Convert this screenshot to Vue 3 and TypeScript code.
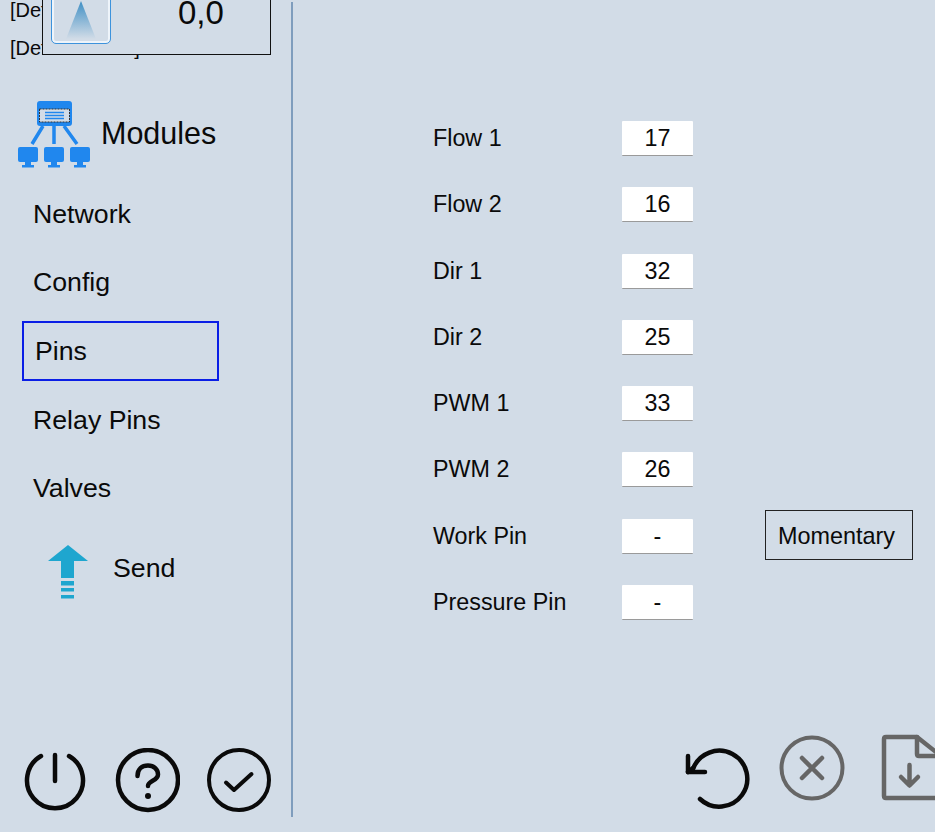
<script setup lang="ts">
const navItems = ['Network', 'Config', 'Pins', 'Relay Pins', 'Valves']
const activeItem = 'Pins'

const pins = [
  { label: 'Flow 1', value: '17' },
  { label: 'Flow 2', value: '16' },
  { label: 'Dir 1', value: '32' },
  { label: 'Dir 2', value: '25' },
  { label: 'PWM 1', value: '33' },
  { label: 'PWM 2', value: '26' },
  { label: 'Work Pin', value: '-', action: 'Momentary' },
  { label: 'Pressure Pin', value: '-' }
]
</script>

<template>
  <div class="screen">
    <aside class="sidebar">
      <div class="log">
        <span>[Default]</span>
        <span>[Default Value]</span>
      </div>

      <!-- floating speed panel, cut off by the window top -->
      <div class="speed-panel">
        <button class="speed-btn">
          <span class="cone"></span>
        </button>
        <span class="speed-value">0,0</span>
      </div>

      <div class="modules">
        <svg class="modules-icon" width="74" height="70" viewBox="0 0 74 70">
          <rect x="19" y="2" width="35" height="25" rx="3" fill="#2087ee" />
          <rect x="21.500" y="10" width="30" height="13" fill="#d2dce7" stroke="#333" stroke-width="1" stroke-dasharray="2 1" />
          <path d="M27 13.500h19M27 16.500h19M27 19.500h19" stroke="#2087ee" stroke-width="1.300" />
          <path d="M25 27 14 45M36 27v18M46 27l13 18" stroke="#2087ee" stroke-width="3.500" fill="none" />
          <g fill="#2087ee">
            <rect x="0" y="48" width="20" height="15" rx="2" />
            <rect x="7" y="63" width="6" height="3" />
            <rect x="4" y="66" width="12" height="2.500" />
            <rect x="26" y="48" width="20" height="15" rx="2" />
            <rect x="33" y="63" width="6" height="3" />
            <rect x="30" y="66" width="12" height="2.500" />
            <rect x="52" y="48" width="20" height="15" rx="2" />
            <rect x="59" y="63" width="6" height="3" />
            <rect x="56" y="66" width="12" height="2.500" />
          </g>
        </svg>
        <span class="modules-label">Modules</span>
      </div>

      <nav class="nav">
        <div
          v-for="item in navItems"
          :key="item"
          :class="['nav-item', { active: item === activeItem }]"
        >
          {{ item }}
        </div>
      </nav>

      <div class="send">
        <svg width="42" height="56" viewBox="0 0 42 56">
          <path d="M21 1 41 17H27V34H14V17H1Z" fill="#1ea6cf" />
          <path d="M14 37h13v4.500H14zM14 44h13v3.500H14zM14 51h13v3.500H14z" fill="#1ea6cf" />
        </svg>
        <span>Send</span>
      </div>

      <div class="bottom-icons">
        <svg width="66" height="66" viewBox="0 0 66 66" fill="none" stroke="#0a0a0a" stroke-width="4.500" stroke-linecap="round">
          <path d="M33 7V33" />
          <path d="M19 8A28 28 0 1 0 47 8" />
        </svg>
        <svg width="66" height="66" viewBox="0 0 66 66" fill="none" stroke="#0a0a0a" stroke-width="4.500" stroke-linecap="round">
          <circle cx="34" cy="32" r="30" />
          <path d="M23.500 28C23.500 21 28 17.500 34 17.500C40 17.500 44 21.500 44 26.500C44 33 34 32.500 34 38" />
          <circle cx="34" cy="48" r="3" fill="#0a0a0a" stroke="none" />
        </svg>
        <svg width="66" height="66" viewBox="0 0 66 66" fill="none" stroke="#0a0a0a" stroke-width="4" stroke-linecap="round" stroke-linejoin="round">
          <circle cx="33" cy="32" r="30" />
          <path d="M20 34.500 28 42 45.500 26" />
        </svg>
      </div>
    </aside>

    <div class="divider"></div>

    <main class="main">
      <div class="pin-list">
        <div v-for="pin in pins" :key="pin.label" class="pin-row">
          <span class="pin-label">{{ pin.label }}</span>
          <span class="pin-value">{{ pin.value }}</span>
          <button v-if="pin.action" class="pin-action">{{ pin.action }}</button>
        </div>
      </div>

      <div class="actions">
        <svg class="undo" width="68" height="64" viewBox="0 0 68 64" fill="none" stroke="#0a0a0a" stroke-width="4.500" stroke-linecap="round" stroke-linejoin="round">
          <path d="M3 8V24H20" />
          <path d="M3 24 8 20" />
          <path d="M8 21A28 28 0 1 1 15 51" />
        </svg>
        <svg class="cancel" width="66" height="66" viewBox="0 0 66 66" fill="none" stroke="#666" stroke-width="4" stroke-linecap="round">
          <circle cx="33" cy="33" r="30.500" />
          <path d="M23 23 43 43M43 23 23 43" stroke-width="4.500" />
        </svg>
        <svg class="file" width="66" height="68" viewBox="0 0 66 68" fill="none" stroke="#666" stroke-width="4.500" stroke-linecap="round" stroke-linejoin="round">
          <path d="M36 3H5Q3 3 3 5V62Q3 64 5 64H58Q60 64 60 62V22L36 3Z" />
          <path d="M36 3V20Q36 22 38 22H60" />
          <path d="M28.500 31V51M20 43l8.500 8.500 8.500-8.500" />
        </svg>
      </div>
    </main>
  </div>
</template>

<style>
html,
body {
  margin: 0;
  background: #d2dce7;
}
</style>

<style scoped>
.screen {
  display: flex;
  width: 935px;
  height: 832px;
  overflow: hidden;
  background: #d2dce7;
  color: #0a0a0a;
  font-family: "Liberation Sans", Arial, sans-serif;
}

.sidebar {
  position: relative;
  flex: none;
  display: flex;
  flex-direction: column;
  width: 291px;
}

.log {
  display: flex;
  flex-direction: column;
  gap: 18px;
  height: 98px;
  padding-left: 10px;
  font-size: 20px;
  line-height: 20px;
  box-sizing: border-box;
}

.speed-panel {
  position: absolute;
  top: -20px;
  left: 42px;
  display: flex;
  align-items: flex-end;
  box-sizing: border-box;
  width: 229px;
  height: 75px;
  border: 1px solid #111;
  background: #d2dce7;
}

.speed-btn {
  position: absolute;
  left: 8px;
  bottom: 10px;
  width: 60px;
  height: 60px;
  padding: 0;
  box-sizing: border-box;
  border: 1px solid #3d93dc;
  border-radius: 5px;
  box-shadow: inset 0 0 0 2px #eef4fa;
  background: #d2dce7;
}

.cone {
  position: absolute;
  left: 14px;
  bottom: 4px;
  width: 30px;
  height: 38px;
  clip-path: polygon(50% 0, 100% 100%, 0 100%);
  background: linear-gradient(#3f8fc4, #d2dce7);
}

.speed-value {
  position: absolute;
  left: 135px;
  bottom: 22px;
  font-size: 33px;
  line-height: 38px;
}

.modules {
  display: flex;
  align-items: center;
  gap: 10px;
  height: 70px;
  padding-left: 18px;
}

.modules-icon {
  flex: none;
  margin-top: 2px;
}

.modules-label {
  margin-left: -1px;
  font-size: 30.500px;
}

.nav {
  display: flex;
  flex-direction: column;
  gap: 8.700px;
  margin-top: 16px;
  padding-left: 22px;
}

.nav-item {
  display: flex;
  align-items: center;
  box-sizing: border-box;
  width: 197px;
  height: 60px;
  padding-left: 9px;
  border: 2px solid transparent;
  font-size: 26.700px;
}

.nav-item.active {
  padding-left: 11px;
  border-color: #0a1ee6;
}

.send {
  display: flex;
  align-items: center;
  gap: 24px;
  height: 56px;
  margin-top: 25px;
  padding-left: 47px;
  font-size: 26.700px;
}

.send span {
  margin-top: -7px;
}

.bottom-icons {
  position: absolute;
  left: 22px;
  top: 748px;
  display: flex;
  gap: 26px;
}

.divider {
  flex: none;
  width: 2px;
  height: 815px;
  margin-top: 2px;
  background: #7f9dbd;
}

.main {
  position: relative;
  flex: 1;
}

.pin-list {
  display: flex;
  flex-direction: column;
  gap: 31.300px;
  padding: 121px 0 0 140px;
}

.pin-row {
  position: relative;
  display: flex;
  align-items: center;
  height: 35px;
}

.pin-label {
  width: 189px;
  font-size: 23.300px;
}

.pin-value {
  box-sizing: border-box;
  width: 71px;
  height: 35px;
  border-bottom: 1.500px solid #9a9a9a;
  border-radius: 1px;
  background: #fff;
  font-size: 23.300px;
  line-height: 35px;
  text-align: center;
}

.pin-action {
  position: absolute;
  left: 332px;
  top: -9px;
  box-sizing: border-box;
  width: 148px;
  height: 50px;
  padding: 3px 0 0 12px;
  border: 1px solid #222;
  background: transparent;
  color: inherit;
  font-family: inherit;
  font-size: 23.400px;
  text-align: left;
}

.actions {
  position: absolute;
  inset: 0;
  pointer-events: none;
}

.undo {
  position: absolute;
  left: 392px;
  top: 748px;
}

.cancel {
  position: absolute;
  left: 486px;
  top: 735px;
}

.file {
  position: absolute;
  left: 588px;
  top: 734px;
}
</style>
